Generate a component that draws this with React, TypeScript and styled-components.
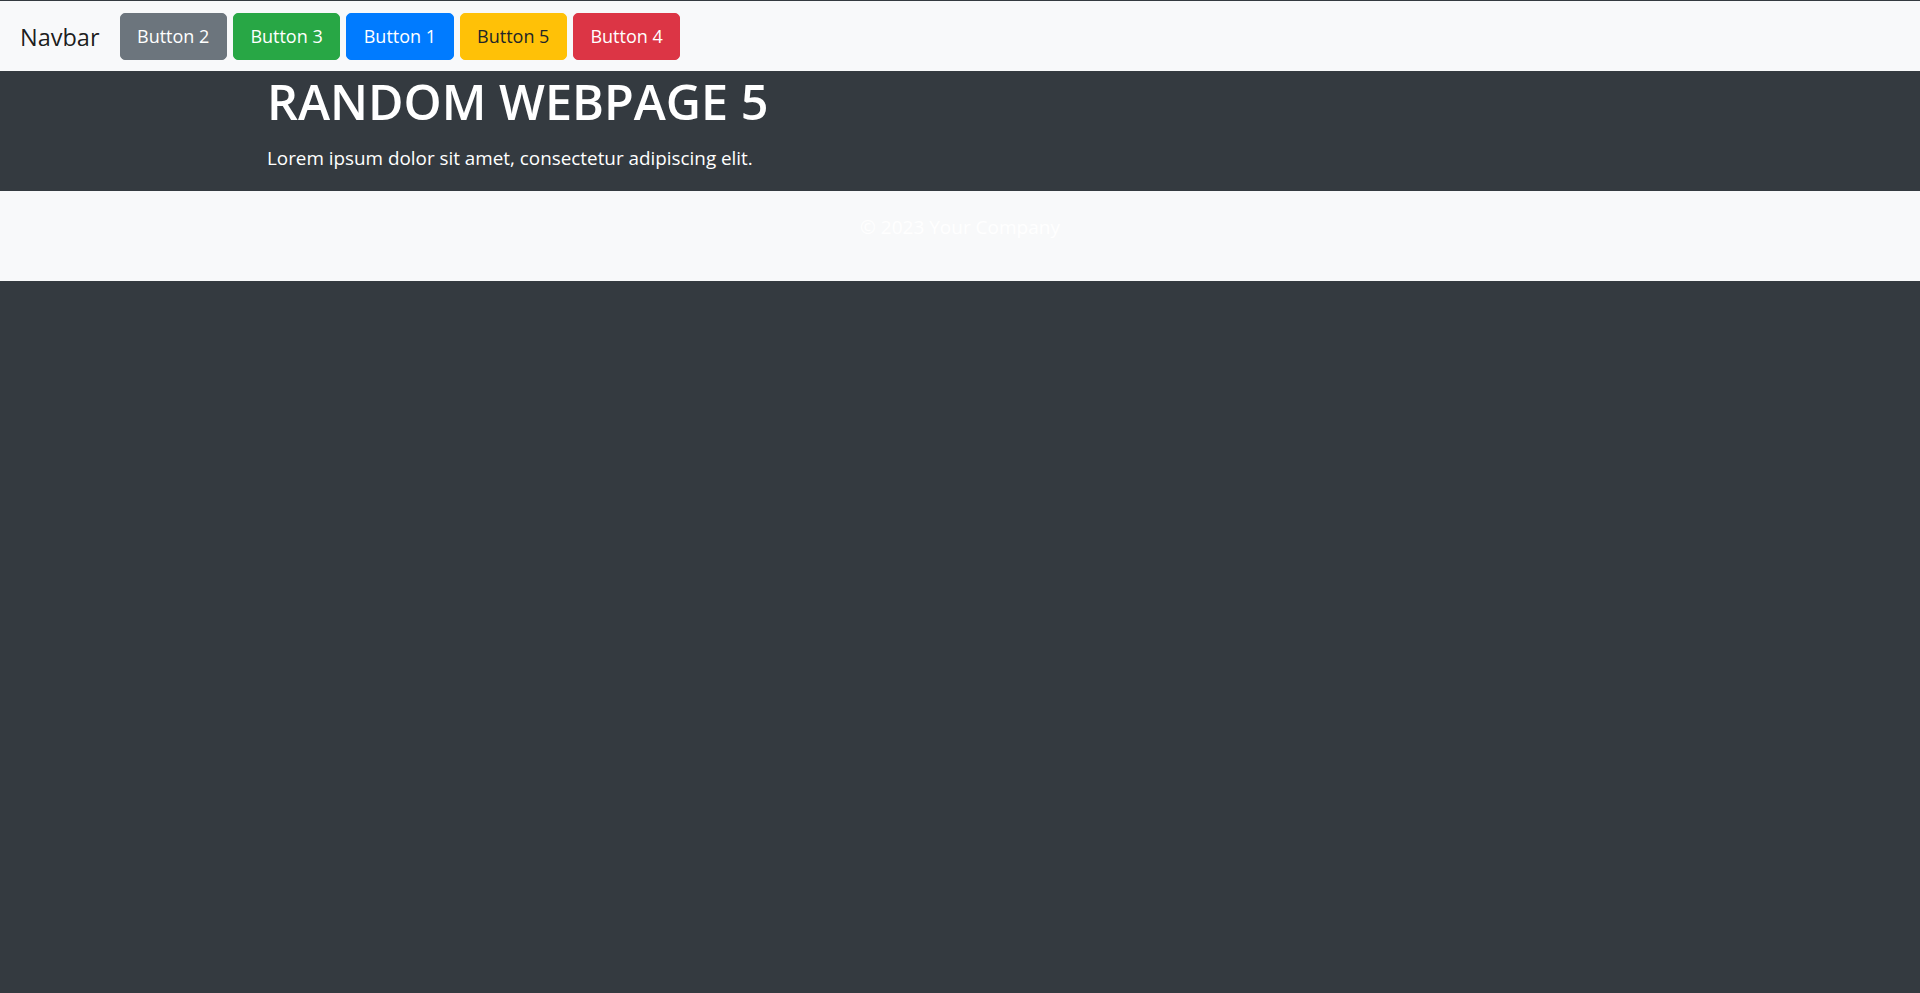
import React from "react";
import styled, { createGlobalStyle } from "styled-components";

const GlobalStyle = createGlobalStyle`
  html, body {
    margin: 0;
    padding: 0;
    background: #343a40;
    font-family: "Open Sans", "Noto Sans", "Liberation Sans", sans-serif;
  }
  * { box-sizing: border-box; }
`;

const Page = styled.div`
  min-height: 993px;
  background: #343a40;
  padding-top: 1px;
`;

const NavBar = styled.nav`
  height: 70px;
  background: #f8f9fa;
  display: flex;
  align-items: center;
  padding: 1px 16px 0 20px;
`;

const Brand = styled.a`
  font-size: 23.5px;
  line-height: 30px;
  color: rgba(0, 0, 0, 0.9);
  text-decoration: none;
  margin-right: 20px;
`;

const ButtonGroup = styled.div`
  display: flex;
  gap: 6px;
`;

const variants: Record<string, { bg: string; fg: string }> = {
  secondary: { bg: "#6c757d", fg: "#fff" },
  success: { bg: "#28a745", fg: "#fff" },
  primary: { bg: "#007bff", fg: "#fff" },
  warning: { bg: "#ffc107", fg: "#212529" },
  danger: { bg: "#dc3545", fg: "#fff" },
};

const Btn = styled.button<{ $variant: string }>`
  font-family: inherit;
  font-size: 18px;
  line-height: 29px;
  padding: 8px 16.5px;
  border: 1px solid ${(p) => variants[p.$variant].bg};
  background: ${(p) => variants[p.$variant].bg};
  color: ${(p) => variants[p.$variant].fg};
  border-radius: 5px;
  cursor: pointer;
`;

const Header = styled.header`
  background: #343a40;
  color: #fff;
  height: 120px;
`;

const Container = styled.div`
  max-width: 1386px;
  margin: 0 auto;
`;

const Title = styled.h1`
  margin: 0 0 13px;
  font-size: 48.5px;
  font-weight: 600;
  line-height: 60px;
`;

const Lead = styled.p`
  margin: 0;
  font-size: 18.85px;
  line-height: 28px;
`;

const Footer = styled.footer`
  background: #f8f9fa;
  height: 90px;
  padding-top: 21px;
  text-align: center;
`;

const FooterText = styled.p`
  margin: 0;
  color: #fff;
  font-size: 19px;
  line-height: 30px;
`;

const buttons = [
  { label: "Button 2", variant: "secondary" },
  { label: "Button 3", variant: "success" },
  { label: "Button 1", variant: "primary" },
  { label: "Button 5", variant: "warning" },
  { label: "Button 4", variant: "danger" },
];

export default function App() {
  return (
    <Page>
      <GlobalStyle />
      <NavBar>
        <Brand href="#">Navbar</Brand>
        <ButtonGroup>
          {buttons.map((b) => (
            <Btn key={b.label} $variant={b.variant}>
              {b.label}
            </Btn>
          ))}
        </ButtonGroup>
      </NavBar>
      <Header>
        <Container>
          <Title>RANDOM WEBPAGE 5</Title>
          <Lead>Lorem ipsum dolor sit amet, consectetur adipiscing elit.</Lead>
        </Container>
      </Header>
      <Footer>
        <FooterText>© 2023 Your Company</FooterText>
      </Footer>
    </Page>
  );
}
